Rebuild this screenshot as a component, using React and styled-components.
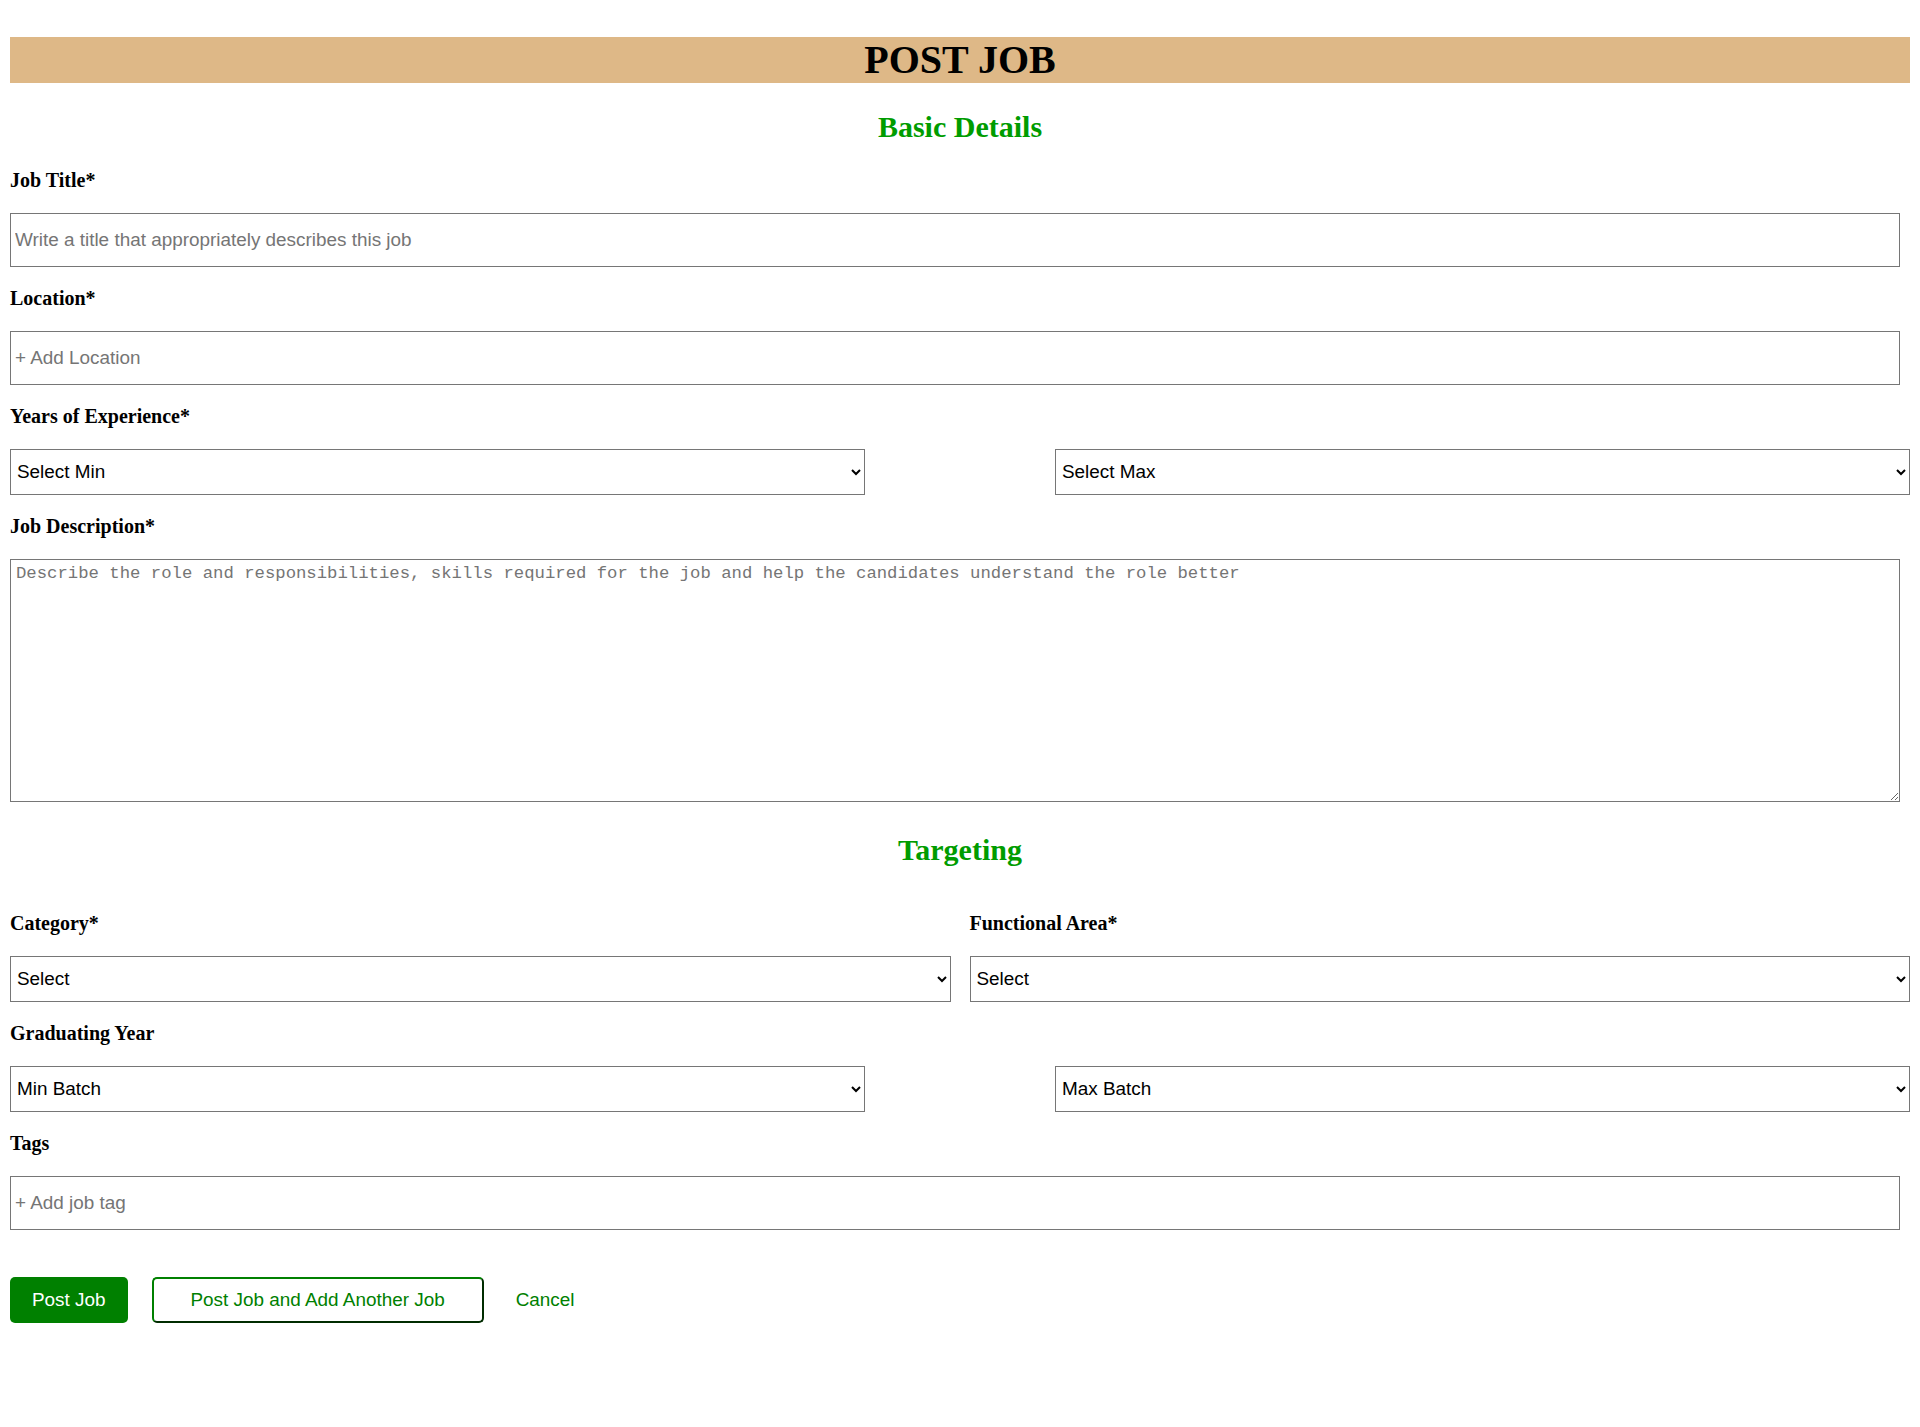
import React from 'react';
import styled, { createGlobalStyle } from 'styled-components';

const GlobalStyle = createGlobalStyle`
  body {
    margin: 0;
    background: #ffffff;
    font-family: "Liberation Serif", "Times New Roman", serif;
  }
`;

const Page = styled.div`
  padding: 10px;
`;

const Header = styled.h1`
  margin: 27px 0 0;
  background-color: burlywood;
  color: #000;
  text-align: center;
  font-size: 40px;
  line-height: 46px;
  font-weight: bold;
`;

const SectionTitle = styled.h2`
  margin: ${props => props.$top}px 0 25px;
  color: #009c00;
  text-align: center;
  font-size: 30px;
  line-height: 34px;
  font-weight: bold;
`;

const Label = styled.label`
  display: block;
  margin: 20.5px 0;
  font-size: 20px;
  line-height: 23px;
  font-weight: bold;
  color: #000;
`;

const TextInput = styled.input`
  display: block;
  box-sizing: border-box;
  width: calc(100% - 10px);
  height: 54px;
  margin: 0;
  padding: 0 4px;
  border: 1px solid #767676;
  border-radius: 0;
  font-family: "Liberation Sans", Arial, sans-serif;
  font-size: 18.9px;
  color: #000;
  outline: none;

  &::placeholder {
    color: #757575;
  }
`;

const Select = styled.select`
  display: block;
  box-sizing: border-box;
  width: ${props => props.$width || '100%'};
  height: 46px;
  margin: 0;
  padding: 0 2px;
  border: 1px solid #767676;
  border-radius: 0;
  background-color: #fff;
  font-family: "Liberation Sans", Arial, sans-serif;
  font-size: 18.9px;
  color: #000;
`;

const TextArea = styled.textarea`
  display: block;
  box-sizing: border-box;
  width: calc(100% - 10px);
  height: 243px;
  margin: 0;
  padding: 4px 5px;
  border: 1px solid #767676;
  border-radius: 0;
  font-family: "Liberation Mono", "Courier New", monospace;
  font-size: 17.3px;
  color: #000;
  outline: none;

  &::placeholder {
    color: #757575;
  }
`;

const Row = styled.div`
  display: flex;
  justify-content: space-between;
`;

const Column = styled.div`
  width: 49.5%;
`;

const ButtonRow = styled.div`
  display: flex;
  align-items: center;
  gap: 24px;
  margin-top: 47px;
`;

const BaseButton = styled.button`
  box-sizing: border-box;
  height: 46px;
  margin: 0;
  border-radius: 5px;
  font-family: "Liberation Sans", Arial, sans-serif;
  font-size: 18.9px;
  cursor: pointer;
`;

const PrimaryButton = styled(BaseButton)`
  padding: 0 22px;
  border: none;
  background-color: #008000;
  color: #fff;
`;

const OutlineButton = styled(BaseButton)`
  padding: 0 37px;
  border: 2px outset #008000;
  background-color: #fff;
  color: #008000;
`;

const TextButton = styled(BaseButton)`
  padding: 0 8px;
  border: none;
  background: transparent;
  color: #008000;
`;

function App() {
  return (
    <>
      <GlobalStyle />
      <Page>
        <Header>POST JOB</Header>

        <SectionTitle $top={27}>Basic Details</SectionTitle>

        <Label>Job Title*</Label>
        <TextInput placeholder="Write a title that appropriately describes this job" />

        <Label>Location*</Label>
        <TextInput placeholder="+ Add Location" />

        <Label>Years of Experience*</Label>
        <Row>
          <Select $width="45%" defaultValue="">
            <option value="">Select Min</option>
          </Select>
          <Select $width="45%" defaultValue="">
            <option value="">Select Max</option>
          </Select>
        </Row>

        <Label>Job Description*</Label>
        <TextArea placeholder="Describe the role and responsibilities, skills required for the job and help the candidates understand the role better" />

        <SectionTitle $top={31}>Targeting</SectionTitle>

        <Row>
          <Column>
            <Label>Category*</Label>
            <Select defaultValue="">
              <option value="">Select</option>
            </Select>
          </Column>
          <Column>
            <Label>Functional Area*</Label>
            <Select defaultValue="">
              <option value="">Select</option>
            </Select>
          </Column>
        </Row>

        <Label>Graduating Year</Label>
        <Row>
          <Select $width="45%" defaultValue="">
            <option value="">Min Batch</option>
          </Select>
          <Select $width="45%" defaultValue="">
            <option value="">Max Batch</option>
          </Select>
        </Row>

        <Label>Tags</Label>
        <TextInput placeholder="+ Add job tag" />

        <ButtonRow>
          <PrimaryButton>Post Job</PrimaryButton>
          <OutlineButton>Post Job and Add Another Job</OutlineButton>
          <TextButton>Cancel</TextButton>
        </ButtonRow>
      </Page>
    </>
  );
}

export default App;
